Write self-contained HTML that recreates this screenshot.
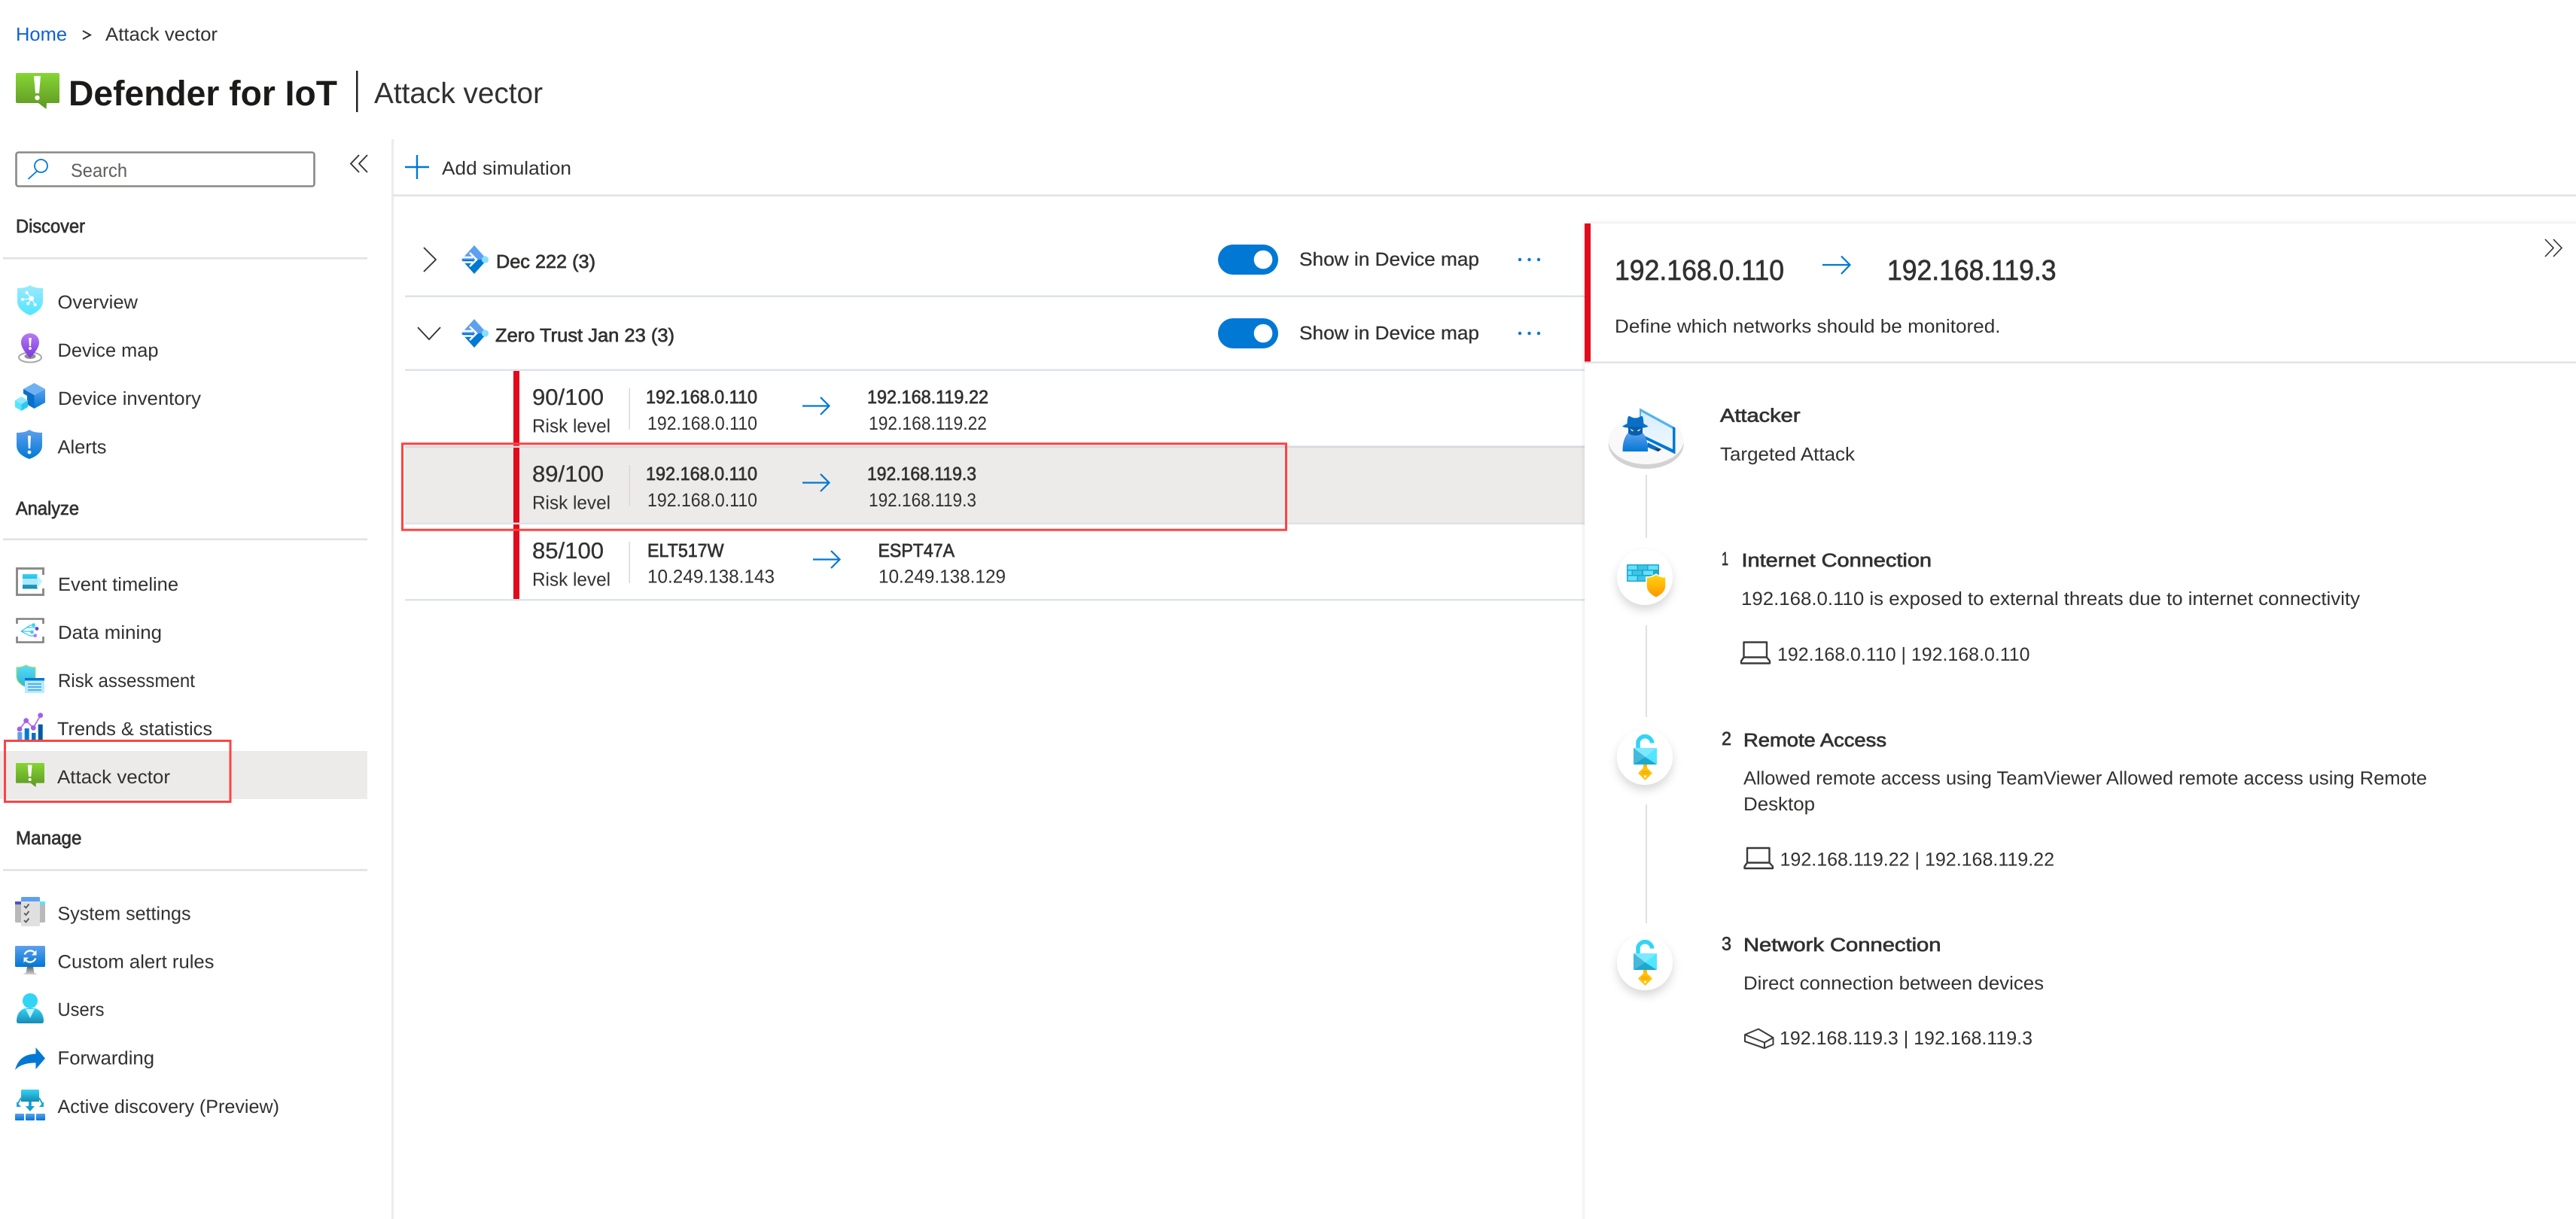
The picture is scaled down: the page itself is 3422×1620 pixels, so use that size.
<!DOCTYPE html>
<html lang="en">
<head>
<meta charset="utf-8">
<title>Defender for IoT | Attack vector</title>
<style>
html,body{margin:0;padding:0;background:#fff;width:3422px;height:1620px;overflow:hidden}
svg{display:block}
text{font-family:"Liberation Sans",Arial,sans-serif;fill:#323130;font-size:25px;text-rendering:geometricPrecision}
.sb{stroke:#323130;stroke-width:.7px}
.md{stroke:#323130;stroke-width:.3px}
.ln{fill:#dfe3e8}
.ic{fill:none;stroke:#0078d4;stroke-width:2.2}
.dk{fill:none;stroke:#323130;stroke-width:2}
.dv{fill:none;stroke:#3a3a3a;stroke-width:2.4;stroke-linejoin:round}
</style>
</head>
<body>
<svg xmlns="http://www.w3.org/2000/svg" width="3422" height="1620" viewBox="0 0 3422 1620">
<defs>
<linearGradient id="gG" x1="0" y1="0" x2="0" y2="1"><stop offset="0" stop-color="#86d633"/><stop offset="1" stop-color="#5e9624"/></linearGradient>
<linearGradient id="gC" x1="0" y1="0" x2="0" y2="1"><stop offset="0" stop-color="#9ce8ff"/><stop offset="1" stop-color="#50e6ff"/></linearGradient>
<linearGradient id="gB" x1="0" y1="0" x2="0" y2="1"><stop offset="0" stop-color="#5ea0ef"/><stop offset="1" stop-color="#0078d4"/></linearGradient>
<linearGradient id="gT" x1="0" y1="0" x2="0" y2="1"><stop offset="0" stop-color="#32d4f5"/><stop offset="1" stop-color="#198ab3"/></linearGradient>
<linearGradient id="gR" x1="0" y1="0" x2="0" y2="1"><stop offset="0" stop-color="#58dcf8"/><stop offset="1" stop-color="#2fb4d8"/></linearGradient>
<linearGradient id="gP" x1="0" y1="0" x2="0" y2="1"><stop offset="0" stop-color="#b77af4"/><stop offset="1" stop-color="#773adc"/></linearGradient>
<linearGradient id="gY" x1="0" y1="0" x2="0" y2="1"><stop offset="0" stop-color="#ffd70f"/><stop offset="1" stop-color="#ff9300"/></linearGradient>
<linearGradient id="gS" x1="0" y1="0" x2="0" y2="1"><stop offset="0" stop-color="#d6edfc"/><stop offset="1" stop-color="#f0f8fe"/></linearGradient>
<linearGradient id="gM" x1="0" y1="0" x2="0" y2="1"><stop offset="0" stop-color="#6a6a6a"/><stop offset="1" stop-color="#d0d0d0"/></linearGradient>
<filter id="fP" x="-5%" y="-5%" width="110%" height="110%"><feDropShadow dx="0" dy="0" stdDeviation="3" flood-color="#000" flood-opacity=".14"/></filter>
<filter id="fC" x="-50%" y="-50%" width="200%" height="200%"><feDropShadow dx="0" dy="7" stdDeviation="6" flood-color="#000" flood-opacity=".15"/></filter>
<g id="av">
<path fill="url(#gG)" d="M2 0H56a2 2 0 0 1 2 2V38a2 2 0 0 1-2 2H41L40.5 48 30 40H2a2 2 0 0 1-2-2V2A2 2 0 0 1 2 0Z"/>
<path fill="#fff" d="M24 4H33L31 27H26Z"/><circle cx="28.5" cy="33" r="3.2" fill="#fff"/>
</g>
<g id="dm">
<path fill="#5ea0ef" d="M17 0L34 19H0Z"/>
<path fill="#0078d4" d="M0 19H34L17 38Z"/>
<path fill="none" stroke="#fff" stroke-width="2.6" d="M0 16H15M0 22.5H15M11 10l9 9-9 9"/>
<circle cx="31.5" cy="19" r="4.6" fill="#83e0ff"/>
</g>
<g id="lk">
<path fill="none" stroke="#32d4f5" stroke-width="5.5" d="M-9.5-12V-20A9.5 9.5 0 0 1 9-20V-18.5"/>
<rect x="-15.5" y="-12" width="31" height="22" rx="1" fill="#50e6ff"/>
<path fill="#7be9ff" d="M-15.5-12H15.5L0 0Z"/>
<path fill="#45b8dc" d="M-15.5-12L0 0-15.5 10Z"/>
<path fill="#1ea7cf" d="M-15.5 10L0 0 15.5 10Z"/>
<rect x="-2.5" y="10" width="5" height="7" fill="#ffb900"/>
<path fill="#ffc20a" d="M0 12L9.5 21.5 0 31-9.5 21.5Z"/>
<path stroke="#f59c00" stroke-width="1" d="M-5 19.5H5M-5 22H5"/>
<circle cx="0" cy="26" r="1.5" fill="#fff"/>
</g>
</defs>

<!-- breadcrumb + title -->
<text x="21" y="54" textLength="68" lengthAdjust="spacingAndGlyphs" style="fill:#0f62d6">Home</text>
<path class="dk" d="M110 41l10 5.5-10 5.5"/>
<text x="140" y="54" textLength="149" lengthAdjust="spacingAndGlyphs">Attack vector</text>
<use href="#av" x="21" y="97"/>
<text x="91" y="140" textLength="357" lengthAdjust="spacingAndGlyphs" style="font-size:47px;font-weight:700;fill:#1b1a19">Defender for IoT</text>
<rect x="473" y="94" width="2.5" height="55" fill="#222"/>
<text x="497" y="137" textLength="224" lengthAdjust="spacingAndGlyphs" style="font-size:39px">Attack vector</text>

<!-- sidebar chrome -->
<rect x="21.5" y="202.5" width="396" height="45" rx="3" fill="#fff" stroke="#8a8886" stroke-width="2.6"/>
<circle cx="54.5" cy="220.5" r="8.5" class="ic" style="stroke-width:1.8"/>
<path class="ic" style="stroke-width:1.8" d="M49 227.5L37.5 238"/>
<text x="94" y="235" textLength="75" lengthAdjust="spacingAndGlyphs" style="fill:#605e5c">Search</text>
<path class="dk" style="stroke-width:1.8" d="M477 206L466 217.5 477 229M488 206L477 217.5 488 229"/>
<rect x="520" y="185" width="3" height="1435" fill="#ececec"/>

<!-- toolbar -->
<path class="ic" style="stroke-width:2.4" d="M538 222H570M554 206V238"/>
<text x="587" y="232" textLength="172" lengthAdjust="spacingAndGlyphs">Add simulation</text>
<rect x="522" y="258.5" width="2900" height="2.5" class="ln"/>

<!-- Discover -->
<text class="sb" x="21" y="309" textLength="92" lengthAdjust="spacingAndGlyphs">Discover</text>
<rect x="4" y="342" width="484" height="2.5" fill="#e1e1e1"/>

<path fill="url(#gC)" d="M40 379C36 382 30 383 23 383V400C23 410 32 416 40 419 48 416 57 410 57 400V383C50 383 44 382 40 379Z"/>
<g fill="#fff"><circle cx="41.7" cy="396.7" r="3.4"/><circle cx="35.7" cy="389" r="2.2"/><circle cx="30" cy="398" r="2"/><circle cx="37.3" cy="403.5" r="2"/><circle cx="46.7" cy="405" r="2"/></g>
<path stroke="#fff" stroke-width="1.1" d="M41.7 396.7L35.7 389M41.7 396.7L30 398M41.7 396.7L37.3 403.5M41.7 396.7L46.7 405"/>
<text x="76.5" y="410" textLength="106.5" lengthAdjust="spacingAndGlyphs">Overview</text>

<ellipse cx="40" cy="475" rx="15" ry="6.5" fill="#fff" stroke="#a8a8a8" stroke-width="2"/>
<ellipse cx="40" cy="473.5" rx="7.5" ry="3.5" fill="#8f8f8f"/>
<path fill="url(#gP)" d="M40 443C33 443 28 448 28 455 28 463 36 471 40 476 44 471 52 463 52 455 52 448 47 443 40 443Z"/>
<path fill="#fff" d="M38.2 449H41.8L41 460H39Z"/><circle cx="40" cy="463" r="1.9" fill="#fff"/>
<text x="76.5" y="474" textLength="134" lengthAdjust="spacingAndGlyphs">Device map</text>

<path fill="#6fb2f2" d="M45.5 509L60 517 45.5 525 31 517Z"/>
<path fill="#0a6fc9" d="M31 517L45.5 525V543L36 537.5V526L31 523Z"/>
<path fill="url(#gB)" d="M60 517V535L45.5 543V525Z"/>
<path fill="#8ce8ff" d="M28.5 527L37 532 28.5 537 20 532Z"/>
<path fill="#50e6ff" d="M20 532L28.5 537V546L20 541Z"/>
<path fill="#32c8e8" d="M37 532V541L28.5 546V537Z"/>
<text x="77" y="538" textLength="190" lengthAdjust="spacingAndGlyphs">Device inventory</text>

<path fill="url(#gB)" d="M39 571C35 574 29 575 22 575V592C22 602 31 607 39 610 47 607 56 602 56 592V575C49 575 43 574 39 571Z"/>
<path fill="#fff" d="M37 579H41L40.2 596H37.8Z"/><circle cx="39" cy="601" r="2.4" fill="#fff"/>
<text x="76.5" y="602.5" textLength="65" lengthAdjust="spacingAndGlyphs">Alerts</text>

<!-- Analyze -->
<text class="sb" x="21" y="684" textLength="84" lengthAdjust="spacingAndGlyphs">Analyze</text>
<rect x="4" y="715.5" width="484" height="2.5" fill="#e1e1e1"/>

<path fill="none" stroke="#8c8c8c" stroke-width="3" d="M57.5 764V755.5H22.5V790.5H57.5V782"/>
<rect x="30" y="763" width="20" height="19.5" fill="url(#gT)"/>
<path fill="#bff0ff" d="M30 769H49V763L56.5 773 49 782V777H30Z" opacity=".9"/>
<text x="77" y="785" textLength="160" lengthAdjust="spacingAndGlyphs">Event timeline</text>

<path fill="none" stroke="#808080" stroke-width="2.6" d="M22.5 829V822.5H57.5V829M22.5 846V853.5H57.5V846"/>
<path fill="none" stroke="#32c8e8" stroke-width="1.2" d="M28 839L40 831H44M28 839H42M28 839L40 845H46M36 834H49"/>
<circle cx="44.5" cy="830.7" r="2.4" fill="#32d4f5"/><circle cx="49" cy="835.5" r="2.4" fill="#773adc"/><circle cx="42.5" cy="840" r="2.4" fill="#32d4f5"/><circle cx="46.7" cy="844.7" r="2.4" fill="#b77af4"/>
<text x="77" y="849" textLength="138" lengthAdjust="spacingAndGlyphs">Data mining</text>

<path fill="url(#gR)" stroke="#a5dc6b" stroke-width="1.2" d="M34.5 884C31 886 26 887 22 887V899C22 906 29 911 34.5 913 40 911 47 906 47 899V887C43 887 38 886 34.5 884Z"/>
<rect x="33" y="901" width="26" height="20" fill="#b4ecff"/>
<rect x="33" y="901" width="26" height="3.5" fill="#0078d4"/>
<path stroke="#0a6fc9" stroke-width="1" d="M37 909H55M37 913H55M37 917H55"/>
<text x="77" y="913" textLength="182" lengthAdjust="spacingAndGlyphs">Risk assessment</text>

<rect x="23.3" y="973" width="6" height="11" fill="#5ea0ef"/>
<rect x="32.7" y="968" width="6" height="16" fill="#0078d4"/>
<rect x="42" y="974" width="5.5" height="10" fill="#0a6fc9"/>
<rect x="50.7" y="962.7" width="6" height="21" fill="#005ba1"/>
<path fill="none" stroke="#b77af4" stroke-width="2" d="M26 969L34.7 957.7 44.3 967.3 53.7 950.7"/>
<g fill="#a45fe8"><circle cx="26" cy="969" r="3.4"/><circle cx="34.7" cy="957.7" r="3.4"/><circle cx="44.3" cy="967.3" r="3.4"/><circle cx="53.7" cy="950.7" r="3.4"/></g>
<text x="76" y="977" textLength="206" lengthAdjust="spacingAndGlyphs">Trends &amp; statistics</text>

<rect x="0" y="998" width="488" height="64" fill="#edebe9"/>
<use href="#av" transform="translate(21 1014) scale(.655 .667)"/>
<text x="76" y="1041" textLength="150" lengthAdjust="spacingAndGlyphs">Attack vector</text>

<!-- Manage -->
<text class="sb" x="21" y="1122" textLength="87.5" lengthAdjust="spacingAndGlyphs">Manage</text>
<rect x="4" y="1155" width="484" height="2.5" fill="#e1e1e1"/>

<rect x="20" y="1198" width="40" height="28" rx="1.5" fill="#b9b9b9"/>
<rect x="20" y="1198" width="8" height="4" fill="#4f4fc9"/><rect x="53" y="1198" width="7" height="4" fill="#50e6ff"/>
<rect x="28" y="1192" width="25" height="39" rx="1.5" fill="#e0e0e0"/>
<path fill="#5ea0ef" d="M29.5 1192H51.5A1.5 1.5 0 0 1 53 1193.5V1198H28V1193.5A1.5 1.5 0 0 1 29.5 1192Z"/>
<path fill="none" stroke="#5c5c5c" stroke-width="1.9" d="M32 1204l2.5 2.5 4-5M32 1213.5l2.5 2.5 4-5M32 1223l2.5 2.5 4-5"/>
<text x="76.5" y="1222.5" textLength="177" lengthAdjust="spacingAndGlyphs">System settings</text>

<path fill="url(#gM)" d="M36 1285H44L45.5 1293 50 1295H30L34.5 1293Z"/>
<rect x="20" y="1257" width="40" height="28" rx="1.5" fill="url(#gB)"/>
<path fill="none" stroke="#fff" stroke-width="2.3" d="M32.7 1268.5A8 8 0 0 1 45.5 1265.5M47.3 1273.5A8 8 0 0 1 34.5 1276.5"/>
<path fill="#fff" d="M48.5 1262.5V1269.5H42ZM31.5 1279.5V1272.5H38Z"/>
<text x="76.5" y="1286.5" textLength="208" lengthAdjust="spacingAndGlyphs">Custom alert rules</text>

<circle cx="40" cy="1330" r="10" fill="#32d4f5"/>
<path fill="url(#gT)" d="M22 1357C22 1346 29 1340 35 1340H45C51 1340 58 1346 58 1357Q58 1360 55 1360H25Q22 1360 22 1357Z"/>
<path fill="#c3f1ff" d="M34 1341H46L40 1353Z"/>
<text x="76.5" y="1350" textLength="62" lengthAdjust="spacingAndGlyphs">Users</text>

<path fill="#0078d4" d="M60 1406.5L47.5 1392V1400.5C33 1401 24 1407 20 1422 26 1415 36 1412.5 47.5 1412.5V1421Z"/>
<text x="76.5" y="1414.5" textLength="128.5" lengthAdjust="spacingAndGlyphs">Forwarding</text>

<path fill="url(#gT)" d="M29.5 1448H50.5A1.5 1.5 0 0 1 52 1449.5V1464H28V1449.5A1.5 1.5 0 0 1 29.5 1448Z"/>
<path fill="none" stroke="#1ea7cf" stroke-width="2" d="M28 1459L23 1468M52 1459L57 1468"/>
<path fill="#1ea7cf" d="M22 1464V1471H28ZM58 1464V1471H52Z"/>
<path fill="#0f9ed5" d="M38.2 1464H41.8V1470H46L40 1477 34 1470H38.2Z"/>
<g fill="url(#gB)"><rect x="20" y="1480" width="12" height="9" rx="1"/><rect x="34" y="1480" width="12" height="9" rx="1"/><rect x="48" y="1480" width="12" height="9" rx="1"/></g>
<text x="76.5" y="1479" textLength="294.5" lengthAdjust="spacingAndGlyphs">Active discovery (Preview)</text>

<!-- list: groups -->
<path class="dk" style="stroke-width:1.8" d="M563 329L579 345 563 361"/>
<use href="#dm" x="613" y="326"/>
<text class="sb" x="659" y="356" textLength="132" lengthAdjust="spacingAndGlyphs">Dec 222 (3)</text>
<rect x="1618" y="325" width="80" height="40" rx="20" fill="#0078d4"/>
<circle cx="1678" cy="345" r="12.3" fill="#fff"/>
<text class="md" x="1726" y="353" textLength="239" lengthAdjust="spacingAndGlyphs">Show in Device map</text>
<g fill="#0078d4"><circle cx="2019" cy="345" r="2.2"/><circle cx="2031.5" cy="345" r="2.2"/><circle cx="2044" cy="345" r="2.2"/></g>

<path class="dk" style="stroke-width:1.8" d="M555 435L570 451 585 435"/>
<use href="#dm" x="613" y="424"/>
<text class="sb" x="658" y="454" textLength="238" lengthAdjust="spacingAndGlyphs">Zero Trust Jan 23 (3)</text>
<rect x="1618" y="423" width="80" height="40" rx="20" fill="#0078d4"/>
<circle cx="1678" cy="443" r="12.3" fill="#fff"/>
<text class="md" x="1726" y="451" textLength="239" lengthAdjust="spacingAndGlyphs">Show in Device map</text>
<g fill="#0078d4"><circle cx="2019" cy="443" r="2.2"/><circle cx="2031.5" cy="443" r="2.2"/><circle cx="2044" cy="443" r="2.2"/></g>

<!-- list: rows -->
<rect x="538" y="595" width="1567" height="100" fill="#edebe9"/>
<rect x="682" y="493" width="8" height="304" fill="#e00b1c"/>
<rect x="538" y="392.5" width="1567" height="2.5" class="ln"/>
<rect x="538" y="490.5" width="1567" height="2.5" class="ln"/>
<rect x="538" y="592.5" width="1567" height="2.5" fill="#d5d9df"/>
<rect x="538" y="694.5" width="1567" height="2.5" class="ln"/>
<rect x="538" y="796" width="1567" height="2.5" class="ln"/>

<text class="md" x="707" y="538" textLength="95" lengthAdjust="spacingAndGlyphs" style="font-size:30px">90/100</text>
<text x="707" y="574.5" textLength="104" lengthAdjust="spacingAndGlyphs">Risk level</text>
<rect x="835.5" y="516" width="1.5" height="55" fill="#d8d8d8"/>
<text class="sb" x="858" y="536" textLength="148" lengthAdjust="spacingAndGlyphs">192.168.0.110</text>
<text x="860" y="571" textLength="146" lengthAdjust="spacingAndGlyphs">192.168.0.110</text>
<path class="ic" d="M1066 539.5H1101M1090 528L1101.5 539.5 1090 551"/>
<text class="sb" x="1152" y="536" textLength="161" lengthAdjust="spacingAndGlyphs">192.168.119.22</text>
<text x="1154" y="571" textLength="157" lengthAdjust="spacingAndGlyphs">192.168.119.22</text>

<text class="md" x="707" y="640" textLength="95" lengthAdjust="spacingAndGlyphs" style="font-size:30px">89/100</text>
<text x="707" y="676.5" textLength="104" lengthAdjust="spacingAndGlyphs">Risk level</text>
<rect x="835.5" y="618" width="1.5" height="55" fill="#d8d8d8"/>
<text class="sb" x="858" y="638" textLength="148" lengthAdjust="spacingAndGlyphs">192.168.0.110</text>
<text x="860" y="673" textLength="146" lengthAdjust="spacingAndGlyphs">192.168.0.110</text>
<path class="ic" d="M1066 641.5H1101M1090 630L1101.5 641.5 1090 653"/>
<text class="sb" x="1152" y="638" textLength="145" lengthAdjust="spacingAndGlyphs">192.168.119.3</text>
<text x="1154" y="673" textLength="143" lengthAdjust="spacingAndGlyphs">192.168.119.3</text>

<text class="md" x="707" y="742" textLength="95" lengthAdjust="spacingAndGlyphs" style="font-size:30px">85/100</text>
<text x="707" y="778.5" textLength="104" lengthAdjust="spacingAndGlyphs">Risk level</text>
<rect x="835.5" y="720" width="1.5" height="55" fill="#d8d8d8"/>
<text class="sb" x="860" y="740" textLength="101.5" lengthAdjust="spacingAndGlyphs">ELT517W</text>
<text x="860" y="774.5" textLength="169" lengthAdjust="spacingAndGlyphs">10.249.138.143</text>
<path class="ic" d="M1080 743.5H1115M1104 732L1115.5 743.5 1104 755"/>
<text class="sb" x="1166.5" y="740" textLength="101.5" lengthAdjust="spacingAndGlyphs">ESPT47A</text>
<text x="1167" y="774.5" textLength="169" lengthAdjust="spacingAndGlyphs">10.249.138.129</text>

<!-- detail panel -->
<rect x="2105" y="297" width="1400" height="1400" fill="#fff" filter="url(#fP)"/>
<rect x="2105" y="297" width="8" height="185" fill="#e00b1c"/>
<rect x="2105" y="480.5" width="1317" height="2.5" class="ln"/>
<text class="sb" x="2145" y="372" textLength="225" lengthAdjust="spacingAndGlyphs" style="font-size:38px">192.168.0.110</text>
<path class="ic" d="M2421 352H2457M2446 340.5L2457.5 352 2446 364"/>
<text class="sb" x="2507" y="372" textLength="224.5" lengthAdjust="spacingAndGlyphs" style="font-size:38px">192.168.119.3</text>
<path class="dk" style="stroke-width:1.6" d="M3381 318L3392 329.5 3381 341M3392 318L3403 329.5 3392 341"/>
<text x="2145" y="442" textLength="512.5" lengthAdjust="spacingAndGlyphs">Define which networks should be monitored.</text>

<!-- attacker icon -->
<ellipse cx="2186.7" cy="590" rx="50" ry="33" fill="#d2d2d2"/>
<ellipse cx="2186.7" cy="585" rx="50" ry="32" fill="#f9f9f9"/>
<path fill="#0078d4" d="M2178 542.5L2225.5 568.5V603.5L2178 580Z"/>
<path fill="#50b4f0" d="M2178 542.5L2222 566.5V570L2180 547V577L2178 580Z"/>
<path fill="url(#gS)" d="M2180 547L2222 570V597L2180 577Z"/>
<path fill="#0a6fc9" d="M2189 588L2207 597 2202 600 2188 594Z"/>
<path fill="#333" d="M2198 596L2207 597 2203 600Z"/>
<path fill="url(#gB)" d="M2155.7 600C2155 590 2158 580 2163 575H2182C2187 580 2189.5 590 2189 600Z"/>
<path fill="#0a6fc9" d="M2164 553C2166 553 2168 555.5 2172.5 555.5 2177 555.5 2179 553 2181 553 2183 553 2183 558 2183.5 563L2189.7 566.5C2186 570 2159 570 2155 566.5L2161.5 563C2162 558 2162 553 2164 553Z"/>
<path fill="#0a5ea8" d="M2163 567H2182V575C2180 580 2165 580 2163 575Z"/>
<path fill="#fff" d="M2165 569.5L2170.5 572.5 2168 573ZM2180 569.5L2174.5 572.5 2177 573Z"/>
<text class="sb" x="2285" y="560.5" textLength="106.5" lengthAdjust="spacingAndGlyphs">Attacker</text>
<text x="2285" y="612" textLength="179" lengthAdjust="spacingAndGlyphs">Targeted Attack</text>

<rect x="2186" y="631" width="2" height="84" fill="#e0e0e0"/>

<!-- step 1 -->
<circle cx="2185" cy="767" r="37" fill="#fff" filter="url(#fC)"/>
<rect x="2161" y="750" width="43" height="23" rx="1" fill="#1ea7cf"/>
<g fill="#66e0fb"><rect x="2162.5" y="751.5" width="12" height="5.5"/><rect x="2176" y="751.5" width="12" height="5.5" fill="#3cc4e6"/><rect x="2189.5" y="751.5" width="13" height="5.5"/><rect x="2162.5" y="758.5" width="5" height="5.5"/><rect x="2169" y="758.5" width="12" height="5.5" fill="#3cc4e6"/><rect x="2183" y="758.5" width="13" height="5.5"/><rect x="2162.5" y="765.5" width="12" height="6"/><rect x="2176" y="765.5" width="12" height="6" fill="#3cc4e6"/></g>
<path fill="url(#gY)" stroke="#fff" stroke-width="1.6" d="M2200 763C2196 766 2191 767 2187 767V779C2187 787 2195 792 2200 794.5 2205 792 2213 787 2213 779V767C2209 767 2204 766 2200 763Z"/>
<text class="sb" x="2287" y="751" textLength="9" lengthAdjust="spacingAndGlyphs" style="font-size:25px">1</text>
<text class="sb" x="2313.5" y="753" textLength="252.5" lengthAdjust="spacingAndGlyphs">Internet Connection</text>
<text x="2313" y="804" textLength="822" lengthAdjust="spacingAndGlyphs">192.168.0.110 is exposed to external threats due to internet connectivity</text>
<path class="dv" d="M2316.5 853.5H2347V873.5H2316.5ZM2316.5 873.5L2313 878.5V881.5H2351V878.5L2347 873.5"/>
<text x="2361" y="878" textLength="335.5" lengthAdjust="spacingAndGlyphs">192.168.0.110 | 192.168.0.110</text>

<rect x="2186" y="831" width="2" height="122" fill="#e0e0e0"/>

<!-- step 2 -->
<circle cx="2185" cy="1006" r="37" fill="#fff" filter="url(#fC)"/>
<use href="#lk" x="2185.5" y="1006"/>
<text class="sb" x="2287" y="990" textLength="13" lengthAdjust="spacingAndGlyphs" style="font-size:25px">2</text>
<text class="sb" x="2316" y="992" textLength="190" lengthAdjust="spacingAndGlyphs">Remote Access</text>
<text x="2316" y="1042.5" textLength="908" lengthAdjust="spacingAndGlyphs">Allowed remote access using TeamViewer Allowed remote access using Remote</text>
<text x="2316" y="1077" textLength="95" lengthAdjust="spacingAndGlyphs">Desktop</text>
<path class="dv" d="M2321 1127H2350.5V1146.5H2321ZM2321 1146.5L2317.5 1151.5V1154H2355V1151.5L2350.5 1146.5"/>
<text x="2364.5" y="1150.5" textLength="364.5" lengthAdjust="spacingAndGlyphs">192.168.119.22 | 192.168.119.22</text>

<rect x="2186" y="1069" width="2" height="158" fill="#e0e0e0"/>

<!-- step 3 -->
<circle cx="2185" cy="1279" r="37" fill="#fff" filter="url(#fC)"/>
<use href="#lk" x="2185.5" y="1279"/>
<text class="sb" x="2287" y="1262.5" textLength="13" lengthAdjust="spacingAndGlyphs" style="font-size:25px">3</text>
<text class="sb" x="2316" y="1264" textLength="262.5" lengthAdjust="spacingAndGlyphs">Network Connection</text>
<text x="2316" y="1315" textLength="399" lengthAdjust="spacingAndGlyphs">Direct connection between devices</text>
<path class="dv" style="stroke-width:2" d="M2318 1375L2336 1367.5 2355.5 1379V1388L2344 1393 2318 1384ZM2318 1375L2344 1385.5 2355.5 1379M2344 1385.5V1393"/>
<text x="2364" y="1388" textLength="336" lengthAdjust="spacingAndGlyphs">192.168.119.3 | 192.168.119.3</text>

<!-- red annotation rectangles -->
<rect x="534.5" y="589.7" width="1174" height="114.5" fill="none" stroke="#ff4343" stroke-width="3"/>
<rect x="6.5" y="984.5" width="299.5" height="81" fill="none" stroke="#ff4343" stroke-width="3"/>
</svg>
</body>
</html>
